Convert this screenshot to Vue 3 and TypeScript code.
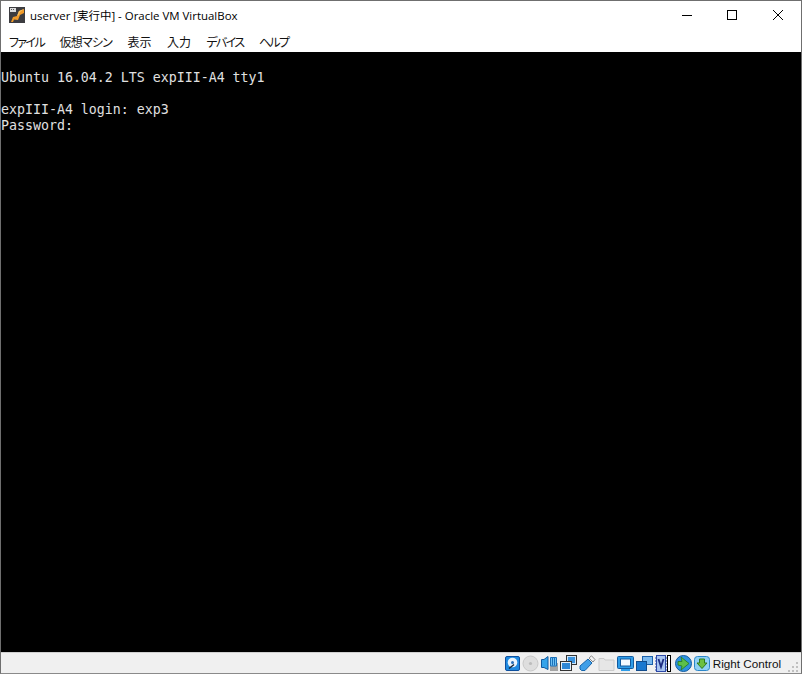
<script setup lang="ts">
interface Menu { label: string; fit: string }
const menus: Menu[] = [
  { label: 'ファイル', fit: 'narrow' },
  { label: '仮想マシン', fit: 'mid' },
  { label: '表示', fit: '' },
  { label: '入力', fit: '' },
  { label: 'デバイス', fit: 'narrow' },
  { label: 'ヘルプ', fit: 'narrow' },
]
const lines: string[] = ['', 'Ubuntu 16.04.2 LTS expIII-A4 tty1', '', 'expIII-A4 login: exp3', 'Password:']
</script>

<template>
  <div class="window">
    <header class="titlebar">
      <svg class="app-icon" width="16" height="16" viewBox="0 0 16 16">
        <rect x="0" y="0" width="16" height="16" fill="#3c3c40" />
        <rect x="1" y="1" width="6" height="4" fill="#dcdcdc" />
        <rect x="2" y="2" width="1" height="1" fill="#555" />
        <rect x="4" y="2" width="1" height="1" fill="#555" />
        <path d="M2 15 L4 10 L8 9 L10 4 L15 2 L15 6 L11 8 L9 13 L5 12.5 L4 15 Z" fill="#f09a28" />
        <path d="M8 9 L10 4 L15 2 L11 5 L10 8 Z" fill="#f8c060" />
      </svg>
      <span class="title">userver [実行中] - Oracle VM VirtualBox</span>
      <div class="controls">
        <svg width="10" height="10" viewBox="0 0 10 10"><path d="M0 5.5H10" stroke="#000" fill="none" /></svg>
        <svg class="max" width="10" height="10" viewBox="0 0 10 10"><rect x="0.5" y="0.5" width="9" height="9" stroke="#000" fill="none" /></svg>
        <svg width="10" height="10" viewBox="0 0 10 10"><path d="M0 0L10 10M10 0L0 10" stroke="#000" stroke-width="1" fill="none" /></svg>
      </div>
    </header>
    <nav class="menubar">
      <span v-for="m in menus" :key="m.label" class="menu" :class="m.fit">{{ m.label }}</span>
    </nav>
    <main class="screen">
      <div v-for="(l, i) in lines" :key="i" class="line">{{ l }}</div>
    </main>
    <footer class="status">
      <div class="icons">
        <!-- hard disk -->
        <svg width="15" height="17" viewBox="0 0 15 17">
          <rect x="0.5" y="1.5" width="14" height="14" rx="1.5" fill="#1f8ae0" stroke="#0d4f9e" />
          <circle cx="7.5" cy="7.5" r="4.8" fill="#e8f4fd" />
          <circle cx="7.5" cy="7.5" r="1.5" fill="#2a6fb8" />
          <path d="M4 13.5L9 9.5" stroke="#123" stroke-width="1.4" />
        </svg>
        <!-- optical -->
        <svg width="17" height="17" viewBox="0 0 17 17">
          <circle cx="8.5" cy="8.5" r="7.5" fill="#dedede" stroke="#c8c8c8" />
          <circle cx="8.5" cy="8.5" r="1.6" fill="#bcbcbc" />
        </svg>
        <!-- audio -->
        <svg width="17" height="17" viewBox="0 0 17 17">
          <rect x="9" y="8" width="8" height="8" fill="#a4a4a4" />
          <path d="M0.5 4.5H3L7 1.5V14.5L3 12.5H0.5Z" fill="#35a4ea" stroke="#125a9e" />
          <path d="M9.5 2.5H15.5V11H9.5Z" fill="#6cc0f4" stroke="#1c70b8" />
          <path d="M11.5 3V10.5M13.5 3V10.5" stroke="#1c70b8" />
        </svg>
        <!-- network -->
        <svg width="17" height="17" viewBox="0 0 17 17">
          <rect x="6.5" y="0.5" width="10" height="9" fill="#cfe6fa" stroke="#333" />
          <rect x="8" y="2" width="7" height="6" fill="#3b93de" />
          <rect x="0.5" y="6.5" width="11" height="9" fill="#e4f0fb" stroke="#333" />
          <rect x="2" y="8" width="8" height="6" fill="#2d87d6" />
        </svg>
        <!-- usb -->
        <svg width="17" height="17" viewBox="0 0 17 17">
          <path d="M1 11L9 4L13 8L6 15.5L2.5 15.5L1 14Z" fill="#3f9fe8" stroke="#1665ab" />
          <path d="M10 3L12.5 0.8L16 4.5L14 7Z" fill="#f2f2f2" stroke="#8a8a8a" />
        </svg>
        <!-- shared folder -->
        <svg width="17" height="17" viewBox="0 0 17 17">
          <path d="M1 3.5H6L7 5H16V15.5H1Z" fill="#e6e6e6" stroke="#cbcbcb" />
        </svg>
        <!-- display -->
        <svg width="17" height="17" viewBox="0 0 17 17">
          <rect x="0.5" y="1.5" width="16" height="12" rx="1" fill="#2e9ce8" stroke="#125a9e" />
          <rect x="3.5" y="4" width="10" height="7" fill="#f2f9ff" stroke="#125a9e" />
          <rect x="4" y="14" width="9" height="2" fill="#2e9ce8" />
        </svg>
        <!-- capture -->
        <svg width="17" height="17" viewBox="0 0 17 17">
          <rect x="6.5" y="1.5" width="10" height="8" fill="#7ab8ee" stroke="#1a5fa8" />
          <rect x="0.5" y="6.5" width="10" height="9" fill="#1a78d0" stroke="#124c8c" />
        </svg>
        <!-- virtualization -->
        <div class="vt">
          <svg width="12" height="17" viewBox="0 0 12 17">
            <rect x="1.5" y="0.5" width="9" height="16" fill="#a8c4f0" stroke="#2c48a8" />
            <path d="M0 3H1.5M0 6H1.5M0 9H1.5M0 12H1.5M0 15H1.5M10.5 3H12M10.5 6H12M10.5 9H12M10.5 12H12M10.5 15H12" stroke="#2c48a8" />
            <path d="M3.5 4L6 12L8.5 4" stroke="#1c2c80" stroke-width="1.8" fill="none" />
          </svg>
          <span class="vt-bar"></span>
        </div>
        <!-- globe -->
        <svg width="17" height="17" viewBox="0 0 17 17">
          <circle cx="8.5" cy="8.5" r="8" fill="#2f93e0" stroke="#125a9e" />
          <path d="M6 2L14 8.5L6 15L7 11L3 10L3 6.5L7 6.5Z" fill="#5cc04a" stroke="#247a1e" stroke-width="0.8" />
        </svg>
        <!-- download -->
        <svg width="16" height="17" viewBox="0 0 16 17">
          <rect x="0.5" y="1.5" width="15" height="14" rx="3" fill="#8fd0f4" stroke="#2b86c9" />
          <path d="M5.5 4H10.5V8H13L8 13.5L3 8H5.5Z" fill="#6cc040" stroke="#2c7a1e" />
        </svg>
      </div>
      <span class="hostkey">Right Control</span>
      <svg class="grip" width="12" height="12" viewBox="0 0 12 12">
        <g fill="#c0c0c0">
          <rect x="8" y="1" width="2" height="2" />
          <rect x="4" y="5" width="2" height="2" />
          <rect x="8" y="5" width="2" height="2" />
          <rect x="0" y="9" width="2" height="2" />
          <rect x="4" y="9" width="2" height="2" />
          <rect x="8" y="9" width="2" height="2" />
        </g>
      </svg>
    </footer>
  </div>
</template>

<style>
html, body { margin: 0; background: #fff; }
</style>

<style scoped>
.window {
  width: 802px;
  height: 674px;
  box-sizing: border-box;
  display: flex;
  flex-direction: column;
  border: 1px solid #6f6f6f;
  border-bottom: 1px solid #8a8a8a;
  background: #fff;
  overflow: hidden;
}
.titlebar {
  height: 28px;
  flex: none;
  display: flex;
  align-items: center;
  padding-left: 8px;
  color: #000;
}
.app-icon { flex: none; }
.title {
  margin-left: 5px;
  font: 11.45px "Open Sans", "Noto Sans CJK JP", sans-serif;
  white-space: nowrap;
}
.controls {
  margin-left: auto;
  display: flex;
  align-items: center;
  gap: 35px;
  padding-right: 18px;
}
.controls .max { margin-right: 1px; }
.menubar {
  height: 23px;
  box-sizing: border-box;
  padding: 2px 0 0 8px;
  flex: none;
  display: flex;
  align-items: center;
  gap: 15.4px;
  font: 12px "Noto Sans CJK JP", sans-serif;
  font-feature-settings: "palt";
  color: #111;
}
.menu.narrow { letter-spacing: -1.6px; }
.menu.mid { letter-spacing: -0.8px; }
.screen {
  flex: 1;
  background: #000;
  color: #e0e0e0;
  padding-top: 2px;
  font: 13.28px/16px "DejaVu Sans Mono", monospace;
  white-space: pre;
}
.line { height: 16px; }
.status {
  height: 21px;
  flex: none;
  display: flex;
  align-items: center;
  background: #f0f0f0;
  border-top: 1px solid #d0d0d0;
  box-sizing: border-box;
  padding-right: 1px;
  justify-content: flex-end;
}
.icons {
  display: flex;
  align-items: center;
  gap: 2px;
}
.vt { display: flex; align-items: center; gap: 0; }
.vt-bar {
  width: 4px;
  height: 17px;
  box-sizing: border-box;
  margin-right: 2px;
  background: #fff;
  border: 1px solid #000;
}
.hostkey {
  margin-left: 3px;
  font: 11.7px "Liberation Sans", sans-serif;
  color: #111;
}
.grip { margin-left: 7px; align-self: flex-end; }
</style>
